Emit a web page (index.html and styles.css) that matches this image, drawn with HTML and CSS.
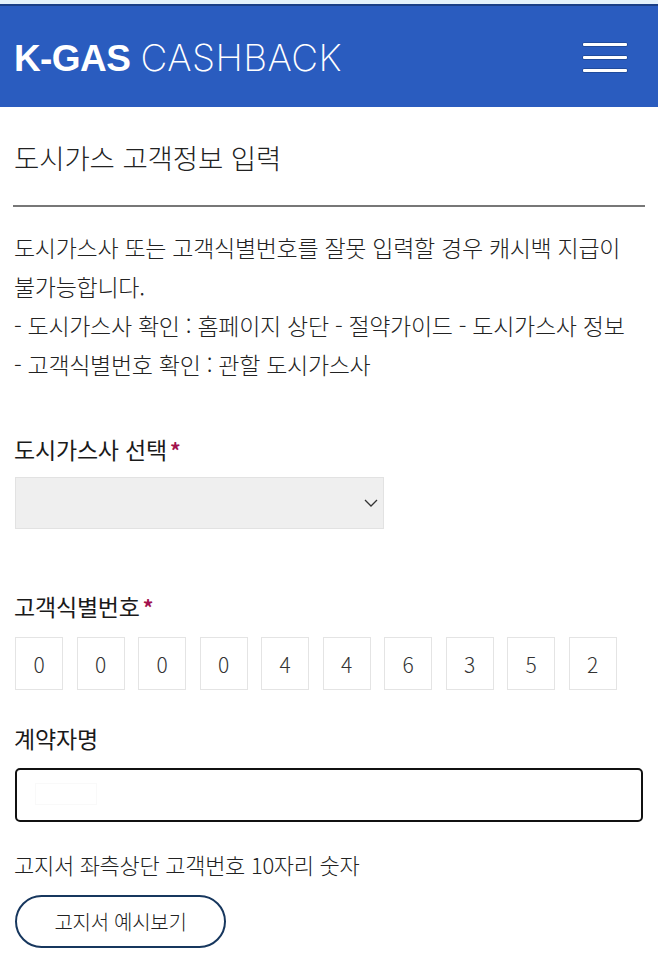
FILE: index.html
```html
<!DOCTYPE html>
<html lang="ko">
<head>
<meta charset="utf-8">
<title>K-GAS CASHBACK</title>
<link rel="stylesheet" href="styles.css">
</head>
<body>
<div class="topstrip"></div>
<header class="header">
  <div class="logo"><span class="logo-bold">K-GAS</span> <span class="logo-thin">CASHBACK</span></div>
  <button class="menu" aria-label="메뉴">
    <span class="bar"></span><span class="bar"></span><span class="bar"></span>
  </button>
</header>
<main class="content">
  <h1 class="title">도시가스 고객정보 입력</h1>
  <hr class="divider">
  <div class="notice">
    <p>도시가스사 또는 고객식별번호를 잘못 입력할 경우 캐시백 지급이 불가능합니다.</p>
    <p>- 도시가스사 확인 : 홈페이지 상단 - 절약가이드 - 도시가스사 정보</p>
    <p>- 고객식별번호 확인 : 관할 도시가스사</p>
  </div>

  <section class="field field-company">
    <label class="label">도시가스사 선택<span class="req">*</span></label>
    <div class="select">
      <svg class="chev" width="14" height="8" viewBox="0 0 14 8"><path d="M1 1 L7 7 L13 1" fill="none" stroke="#333" stroke-width="1.3"/></svg>
    </div>
  </section>

  <section class="field field-id">
    <label class="label">고객식별번호<span class="req">*</span></label>
    <div class="digits">
      <span class="digit">0</span><span class="digit">0</span><span class="digit">0</span><span class="digit">0</span><span class="digit">4</span><span class="digit">4</span><span class="digit">6</span><span class="digit">3</span><span class="digit">5</span><span class="digit">2</span>
    </div>
  </section>

  <section class="field field-name">
    <label class="label">계약자명</label>
    <div class="input"><span class="ghost"></span></div>
  </section>

  <p class="hint">고지서 좌측상단 고객번호 10자리 숫자</p>
  <button class="pill">고지서 예시보기</button>
</main>
</body>
</html>
```

FILE: styles.css
```css
* { box-sizing: border-box; }
html, body { margin: 0; padding: 0; background: #fff; }
body {
  font-family: "Noto Sans CJK KR", "Noto Sans", sans-serif;
  color: #222;
  width: 658px;
}
.topstrip { height: 4px; background: #e4f2fb; }
.header {
  height: 103px;
  background: #2a5cbf;
  border-top: 2px solid #1a3f86;
  display: flex;
  align-items: center;
  justify-content: space-between;
  padding: 0 31px 0 14px;
}
.logo {
  color: #fff;
  font-size: 37px;
  line-height: 1;
  white-space: nowrap;
}
.logo-bold { font-family: "Liberation Sans", Arial, sans-serif; font-weight: 700; letter-spacing: -0.6px; }
.logo-thin { font-family: "Inter", "Liberation Sans", sans-serif; font-weight: 200; letter-spacing: 0.4px; }
.menu {
  background: none;
  border: 0;
  padding: 0;
  width: 44px;
  display: flex;
  flex-direction: column;
  gap: 10px;
  margin-top: 2px;
}
.bar {
  display: block;
  height: 3px;
  background: #fff;
  border-radius: 1px;
  box-shadow: 0 0 0 0.5px #163a7a;
}
.content { padding: 0 13px 0 14px; }
.title {
  margin: 31px 0 0;
  font-size: 27.5px;
  font-weight: 300;
  line-height: 38px;
  color: #222;
  letter-spacing: -0.1px;
}
.divider {
  margin: 29px 0 0 -1px;
  border: 0;
  border-top: 2px solid #777;
  height: 0;
}
.notice { margin-top: 21px; font-size: 23px; font-weight: 300; line-height: 39px; color: #222; letter-spacing: -0.3px; }
.notice p { margin: 0; }
.field { display: flex; flex-direction: column; }
.label { font-size: 23px; font-weight: 400; line-height: 32px; color: #1a1a1a; letter-spacing: -0.2px; }
.req { color: #a2124e; margin-left: 3px; font-size: 21px; font-weight: 700; }
.field-company { margin-top: 49px; }
.field-company .select { margin-top: 11px; }
.select {
  width: 369px;
  height: 52px;
  margin-left: 1px;
  background: #efefef;
  border: 1px solid #e2e2e2;
  display: flex;
  align-items: center;
  justify-content: flex-end;
  padding-right: 5px;
}
.field-id { margin-top: 61px; }
.digits { display: flex; gap: 13.5px; margin-top: 14px; margin-left: 1px; }
.digit {
  width: 48px;
  height: 53px;
  border: 1px solid #e4e4e4;
  display: flex;
  align-items: center;
  justify-content: center;
  font-size: 21px;
  font-weight: 300;
  color: #333;
}
.field-name { margin-top: 32px; }
.input {
  margin-top: 14px;
  margin-left: 1px;
  width: 628px;
  height: 54px;
  border: 2px solid #111;
  border-radius: 5px;
  padding: 13px 0 0 18px;
}
.ghost { display: block; width: 62px; height: 22px; border: 1px solid #f9f9f9; }
.hint { margin: 26px 0 0; font-size: 22px; font-weight: 300; line-height: 32px; color: #222; letter-spacing: -0.3px; }
.pill {
  margin-top: 15px;
  margin-left: 1px;
  width: 211px;
  height: 53px;
  border: 2px solid #17375e;
  border-radius: 27px;
  background: #fff;
  font-family: "Noto Sans CJK KR", sans-serif;
  font-size: 20px;
  font-weight: 300;
  color: #222;
  letter-spacing: -0.3px;
}
```
